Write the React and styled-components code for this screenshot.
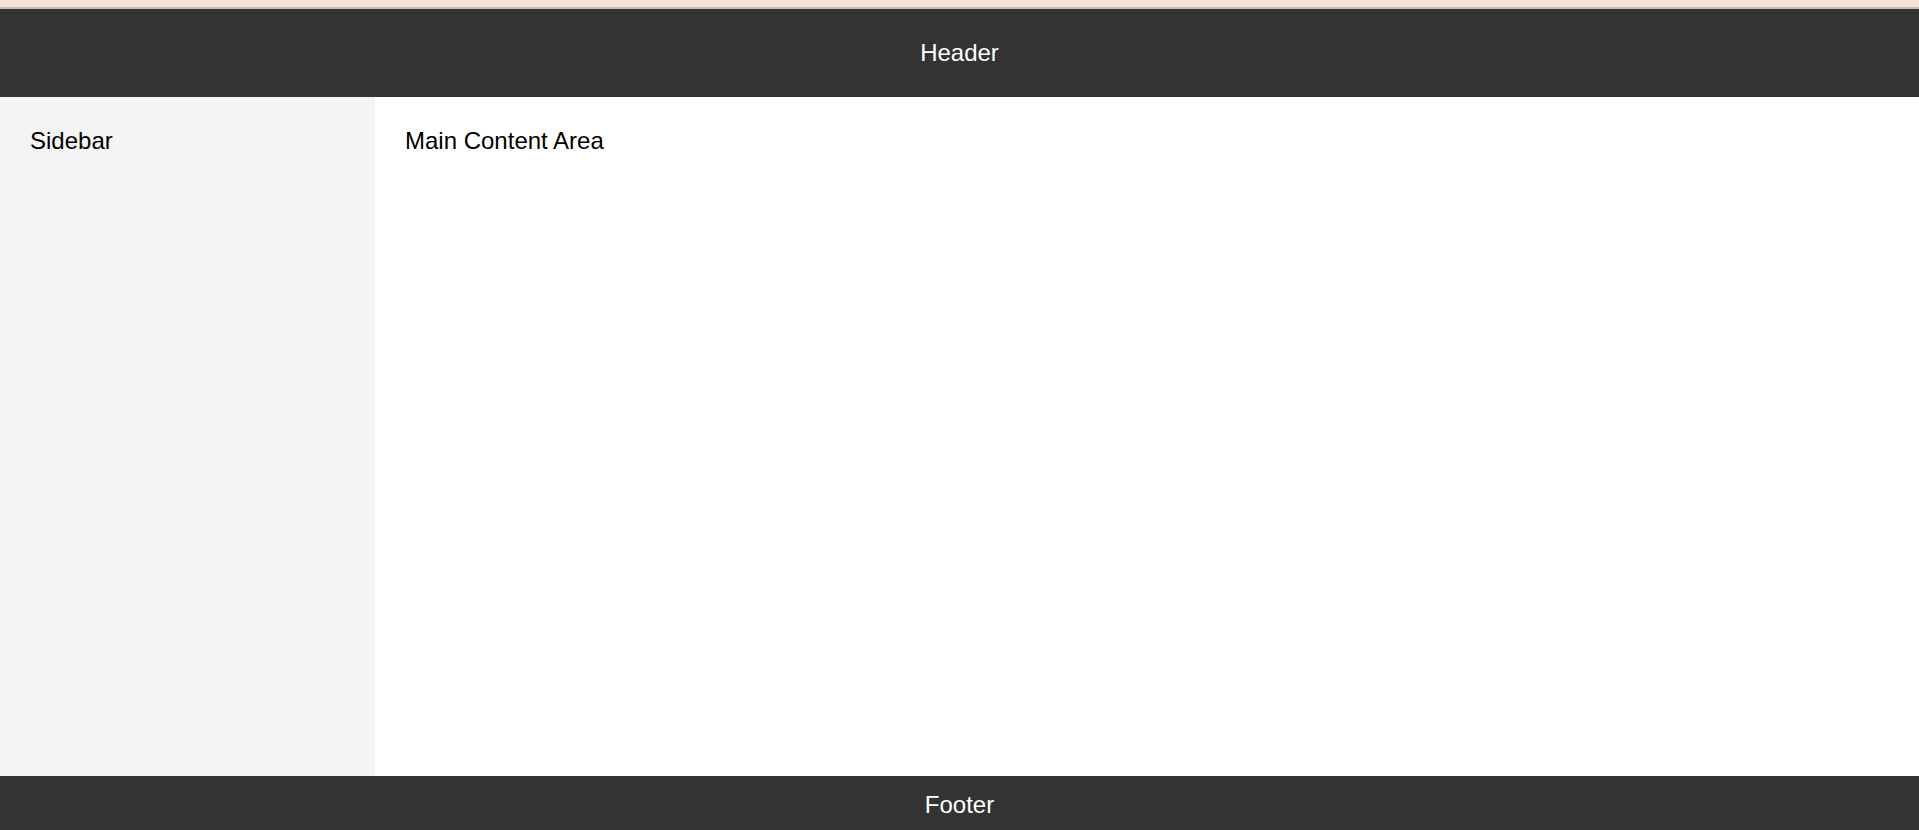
import React from "react"
import styled, { createGlobalStyle } from "styled-components"

const GlobalStyle = createGlobalStyle`
  * {
    box-sizing: border-box;
  }
  html, body {
    margin: 0;
    padding: 0;
    background: #fff;
    font-family: "Liberation Sans", Arial, sans-serif;
    font-size: 24px;
    color: #000;
  }
`

const Page = styled.div`
  display: flex;
  flex-direction: column;
`

const TopStrip = styled.div`
  height: 9px;
  background: #f6e1db;
  border-bottom: 2px solid #cbb7b1;
`

const Bar = styled.div`
  background: #333;
  color: #fff;
  text-align: center;
  padding: ${({ pad }) => pad}px 20px;
`

const Body = styled.div`
  display: flex;
  height: calc(100vh - 151px);
`

const Sidebar = styled.aside`
  width: 375px;
  flex-shrink: 0;
  background: #f4f4f4;
  padding: 30px;
`

const Main = styled.main`
  flex: 1;
  padding: 30px;
`

const App = () => {
  return (
    <>
      <GlobalStyle />
      <Page>
        <TopStrip />
        <Bar pad={30}>Header</Bar>
        <Body>
          <Sidebar>Sidebar</Sidebar>
          <Main>Main Content Area</Main>
        </Body>
        <Bar pad={15}>Footer</Bar>
      </Page>
    </>
  )
}

export default App
